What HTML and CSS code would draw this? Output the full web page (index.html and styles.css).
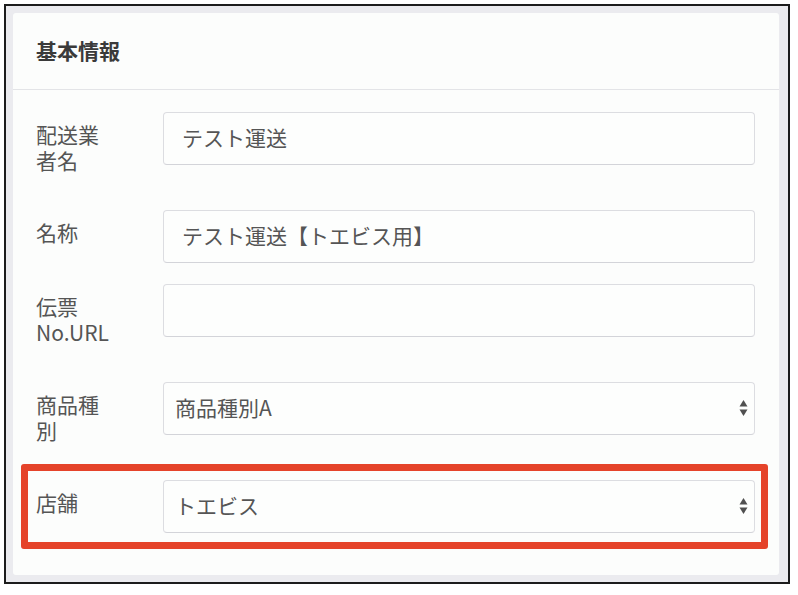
FILE: index.html
```html
<!DOCTYPE html>
<html lang="ja">
<head>
    <meta charset="UTF-8">
    <meta name="viewport" content="width=device-width, initial-scale=1.0">
    <title>基本情報</title>
    <link rel="stylesheet" href="styles.css">
</head>
<body>
    <div class="frame">
        <div class="card">
            <header class="card-header">
                <h2>基本情報</h2>
            </header>
            <div class="card-body">
                <!-- 配送業者名 -->
                <div class="row">
                    <label class="label">配送業者名</label>
                    <input class="control" type="text" value="テスト運送">
                </div>

                <div class="row">
                    <label class="label">名称</label>
                    <input class="control" type="text" value="テスト運送【トエビス用】">
                </div>

                <div class="row">
                    <label class="label">伝票<br>No.URL</label>
                    <input class="control" type="text" value="">
                </div>

                <div class="row">
                    <label class="label">商品種別</label>
                    <div class="select-wrap">
                        <select class="control select">
                            <option>商品種別A</option>
                        </select>
                        <svg class="arrows" width="9" height="20" viewBox="0 0 9 20">
                            <path d="M4.5 2 L8.5 8.5 H0.5 Z" fill="#505050"/>
                            <path d="M4.5 18 L8.5 11.5 H0.5 Z" fill="#505050"/>
                        </svg>
                    </div>
                </div>

                <!-- 店舗（強調表示） -->
                <div class="row row-highlight">
                    <label class="label">店舗</label>
                    <div class="select-wrap">
                        <select class="control select">
                            <option>トエビス</option>
                        </select>
                        <svg class="arrows" width="9" height="20" viewBox="0 0 9 20">
                            <path d="M4.5 2 L8.5 8.5 H0.5 Z" fill="#505050"/>
                            <path d="M4.5 18 L8.5 11.5 H0.5 Z" fill="#505050"/>
                        </svg>
                    </div>
                    <div class="highlight"></div>
                </div>
            </div>
        </div>
    </div>
</body>
</html>
```

FILE: styles.css
```css
body {
    margin: 0;
    padding: 0;
    background-color: #ffffff;
    font-family: "Noto Sans CJK JP", "Noto Sans", sans-serif;
    color: #555555;
}
.frame {
    box-sizing: border-box;
    width: 786px;
    height: 580px;
    margin: 4px 0 0 4px;
    padding: 7px 9px 7px 7px;
    border: 2px solid #1c1c1c;
    background-color: #ebebef; /* fundo cinza em volta do card */
}
.card {
    height: 100%;
    background-color: #fcfdfc;
    border-radius: 3px;
}
.card-header {
    display: flex;
    align-items: center;
    height: 76px;
    padding-left: 23px;
    border-bottom: 1px solid #e3e4e7;
}
.card-header h2 {
    margin: 0 0 2px;
    font-size: 21px;
    font-weight: bold;
    color: #3a3a3a;
}
.card-body {
    padding: 22px 24px 0 23px;
}
.row {
    display: flex;
    align-items: flex-start;
    margin-bottom: 21px;
}
.label {
    width: 80px;
    padding: 9px 47px 16px 0;
    font-size: 21px;
    line-height: 26px;
    color: #555555;
}
.control {
    flex: 1;
    box-sizing: border-box;
    height: 53px;
    padding: 0 16px 3px 18px;
    border: 1px solid #dcdde1;
    border-bottom-color: #d3d4d9;
    border-radius: 4px;
    background-color: #fdfefd;
    font-family: "Noto Sans CJK JP", "Noto Sans", sans-serif;
    font-size: 21px;
    color: #555555;
    outline: none;
}
.select-wrap {
    position: relative;
    flex: 1;
    display: flex;
}
.select {
    width: 100%;
    padding-left: 11px;
    appearance: none;
    -webkit-appearance: none;
}
.arrows {
    position: absolute;
    right: 7px;
    top: 16px;
}
.row-highlight {
    position: relative;
}
.highlight {
    position: absolute;
    top: -16px;
    bottom: -16px;
    left: -15px;
    right: -13px;
    border: 7px solid #e5432a;
    border-radius: 3px;
    pointer-events: none;
}
```
